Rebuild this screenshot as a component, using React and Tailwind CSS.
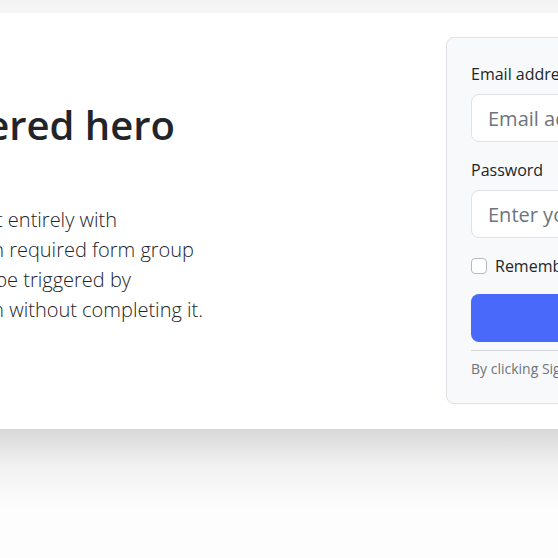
// App.jsx
const heroLines = [
  { text: "Below is an example form built entirely with", width: "w-[117px]" },
  { text: "Bootstrap’s form controls. Each required form group", width: "w-[194px]" },
  { text: "has a validation state that can be triggered by", width: "w-[131px]" },
  { text: "attempting to submit the form without completing it.", width: "w-[203px]" },
];

const App = () => {
  return (
    <div
      className="w-[558px] h-[558px] overflow-hidden bg-[#fdfdfd] text-[#212529]"
      style={{ fontFamily: '"Open Sans", "Noto Sans", sans-serif' }}
    >
      {/* previous divider tail */}
      <div className="h-[13px] bg-linear-to-b from-[#f2f2f2] to-[#f7f7f7]"></div>

      {/* HERO SECTION */}
      <div className="h-[416px] bg-white flex items-center">
        {/* LEFT COPY */}
        <div className="w-[446px] shrink-0 flex flex-col">
          <div className="flex justify-end w-[175px] mb-[56px]">
            <h1 className="whitespace-nowrap text-[40px] leading-[48px] font-semibold">
              Vertically centered hero
            </h1>
          </div>
          <div className="mb-4 text-[20px] leading-[30px] font-light">
            {heroLines.map((line) => (
              <div key={line.text} className={`flex justify-end ${line.width}`}>
                <span className="whitespace-nowrap">{line.text}</span>
              </div>
            ))}
          </div>
        </div>

        {/* SIGN UP CARD */}
        <form className="self-start mt-6 w-[420px] shrink-0 p-6 bg-[#f8f9fa] border border-[#dee2e6] rounded-lg">
          <label className="block text-base leading-6 mb-2">Email address</label>
          <input
            type="email"
            placeholder="Email address"
            className="block w-full h-12 px-4 mb-4 bg-white border border-[#dee2e6] rounded-lg text-xl placeholder:text-[#6c757d] outline-none"
          />

          <label className="block text-base leading-6 mb-2">Password</label>
          <input
            type="password"
            placeholder="Enter your password"
            className="block w-full h-12 px-4 mb-4 bg-white border border-[#dee2e6] rounded-lg text-xl placeholder:text-[#6c757d] outline-none"
          />

          <div className="flex items-center gap-2 h-6 mb-4">
            <span className="w-4 h-4 bg-white border border-[#b5b9bd] rounded-[4px]"></span>
            <span className="text-base leading-6">Remember me</span>
          </div>

          <button
            type="button"
            className="block w-full h-12 bg-[#4869f9] text-white text-xl rounded-lg"
          >
            Sign up
          </button>

          <hr className="mt-2 mb-[7px] border-t border-[#d6d8da]" />

          <p className="text-sm leading-[21px] text-[#6c757d]">
            By clicking Sign up, you agree to the terms of use.
          </p>
        </form>
      </div>

      {/* DIVIDER */}
      <div className="h-[80px] bg-linear-to-b from-[#d8d8d8] via-[#f1f1f1] via-45% to-[#fdfdfd]"></div>
    </div>
  );
};

export default App;
